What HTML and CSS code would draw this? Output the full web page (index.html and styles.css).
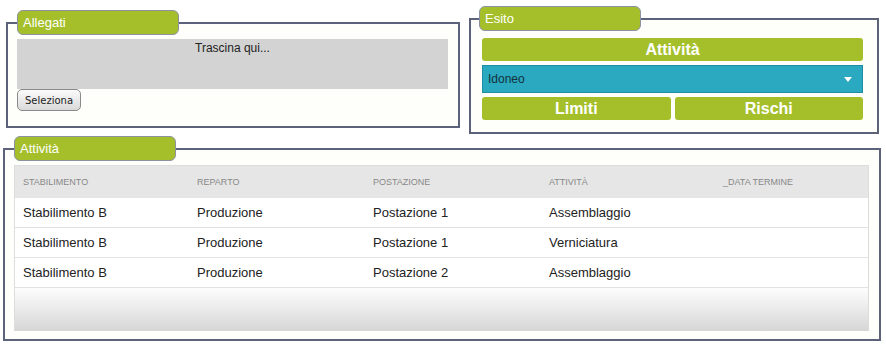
FILE: index.html
```html
<!DOCTYPE html>
<html lang="it">
<head>
    <meta charset="UTF-8">
    <title>Attività</title>
    <link rel="stylesheet" href="styles.css">
</head>
<body>
    <div class="top-row">
        <fieldset class="box allegati">
            <legend>Allegati</legend>
            <div class="dropzone">Trascina qui...</div>
            <button class="btn-select">Seleziona</button>
        </fieldset>
        <fieldset class="box esito">
            <legend>Esito</legend>
            <div class="esito-body">
                <div class="green-btn">Attività</div>
                <div class="combo">
                    <span>Idoneo</span>
                    <span class="arrow"></span>
                </div>
                <div class="btn-pair">
                    <div class="green-btn">Limiti</div>
                    <div class="green-btn">Rischi</div>
                </div>
            </div>
        </fieldset>
    </div>
    <fieldset class="box attivita">
        <legend>Attività</legend>
        <div class="grid">
            <div class="row head">
                <div>Stabilimento</div>
                <div>Reparto</div>
                <div>Postazione</div>
                <div>Attività</div>
                <div>_Data termine</div>
            </div>
            <div class="row">
                <div>Stabilimento B</div>
                <div>Produzione</div>
                <div>Postazione 1</div>
                <div>Assemblaggio</div>
                <div></div>
            </div>
            <div class="row">
                <div>Stabilimento B</div>
                <div>Produzione</div>
                <div>Postazione 1</div>
                <div>Verniciatura</div>
                <div></div>
            </div>
            <div class="row">
                <div>Stabilimento B</div>
                <div>Produzione</div>
                <div>Postazione 2</div>
                <div>Assemblaggio</div>
                <div></div>
            </div>
            <div class="grid-footer"></div>
        </div>
    </fieldset>
</body>
</html>
```

FILE: styles.css
```css
body {
    margin: 0;
    background: #fff;
    font-family: 'Liberation Sans', Arial, sans-serif;
    color: #333;
}
.top-row {
    display: flex;
    align-items: flex-start;
    gap: 9px;
    padding-left: 6px;
}
.box {
    margin: 0;
    border: 2px solid #5b6279;
    background: #fefefa;
    box-sizing: border-box;
    min-width: 0;
}
.box legend {
    box-sizing: border-box;
    width: 162px;
    height: 25px;
    padding: 0 5px;
    background: #a5bf2b;
    border: 1px solid #8d92a2;
    border-radius: 6px;
    color: #fff;
    font-size: 13px;
    line-height: 23px;
}
.allegati {
    width: 454px;
    margin-top: 10px;
    padding: 4px 10px 15px 9px;
}
.dropzone {
    height: 50px;
    background: #d3d3d3;
    text-align: center;
    font-size: 12px;
    color: #222;
    padding-top: 2px;
    box-sizing: border-box;
}
.btn-select {
    display: block;
    width: 64px;
    height: 22px;
    padding: 0;
    border: 1px solid #8a8a8a;
    border-radius: 5px;
    background: linear-gradient(to bottom, #fbfbfb, #d9d9d9);
    font-family: 'DejaVu Sans', sans-serif;
    font-size: 10px;
    color: #222;
}
.esito {
    width: 410px;
    margin-top: 6px;
    padding: 7px 14px 12px 8px;
}
.esito-body {
    display: flex;
    flex-direction: column;
    gap: 4px;
    margin-left: 3px;
}
.green-btn {
    height: 23px;
    background: #a5bf2b;
    border-radius: 3px;
    color: #fff;
    font-weight: bold;
    font-size: 16px;
    line-height: 23px;
    text-align: center;
}
.combo {
    height: 28px;
    box-sizing: border-box;
    background: #2aa9c0;
    border: 1px solid #1f8ea3;
    display: flex;
    align-items: center;
    justify-content: space-between;
    padding: 0 10px 0 5px;
    font-size: 12px;
    color: #13303c;
}
.arrow {
    width: 0;
    height: 0;
    border-left: 4px solid transparent;
    border-right: 4px solid transparent;
    border-top: 5px solid #fff;
}
.btn-pair {
    display: flex;
    gap: 4px;
}
.btn-pair .green-btn {
    flex: 1;
}
.attivita {
    width: 878px;
    margin: 2px 0 0 3px;
    padding: 4px 10px 8px 9px;
}
.grid {
    border: 1px solid #ddd;
    border-bottom: none;
}
.row {
    display: grid;
    grid-template-columns: 174px 176px 176px 174px 1fr;
    box-sizing: border-box;
    height: 30px;
    align-items: center;
    background: #fff;
    border-bottom: 1px solid #e2e2e2;
    font-size: 13px;
    color: #222;
}
.row > div {
    padding-left: 8px;
}
.row.head {
    height: 32px;
    background: #e6e6e6;
    border-bottom: none;
    font-size: 9px;
    text-transform: uppercase;
    color: #888;
}
.row:last-of-type {
    height: 31px;
    border-bottom: 2px solid #ddd;
}
.grid-footer {
    height: 43px;
    background: linear-gradient(to bottom, #fdfdfd, #d6d6d6);
}
```
